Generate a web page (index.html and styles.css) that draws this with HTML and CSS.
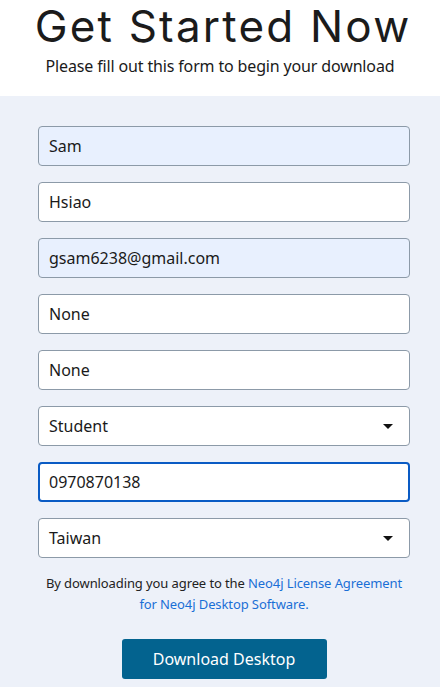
FILE: index.html
```html
<!DOCTYPE html>
<html>
<head>
<meta charset="utf-8">
<link rel="stylesheet" href="styles.css">
</head>
<body>
<header class="hero">
  <h1 class="title">Get Started Now</h1>
  <p class="subtitle">Please fill out this form to begin your download</p>
</header>
<section class="panel">
  <form class="form">
    <div class="field autofill">Sam</div>
    <div class="field">Hsiao</div>
    <div class="field autofill">gsam6238@gmail.com</div>
    <div class="field">None</div>
    <div class="field">None</div>
    <div class="field select"><span>Student</span><span class="caret"></span></div>
    <div class="field focus">0970870138</div>
    <div class="field select"><span>Taiwan</span><span class="caret"></span></div>
  </form>
  <p class="legal">By downloading you agree to the <a href="#">Neo4j License Agreement<br>for Neo4j Desktop Software.</a></p>
  <div class="actions"><button class="btn" type="button">Download Desktop</button></div>
</section>
</body>
</html>
```
FILE: styles.css
```css
* { box-sizing: border-box; }
html, body { margin: 0; padding: 0; background: #fff; }
body { font-family: "Noto Sans", "Open Sans", sans-serif; color: #1a1a1a; }
.hero { text-align: center; height: 96px; }
.title {
  margin: 0;
  padding-left: 6px;
  font-family: "Inter", sans-serif;
  font-weight: 400;
  font-size: 44px;
  line-height: 52px;
  letter-spacing: 2.2px;
  color: #1b1b1b;
}
.subtitle { margin: 3px 0 0; font-size: 16px; line-height: 22px; letter-spacing: -0.15px; color: #1a1a1a; }
.panel { background: #edf1f9; padding: 30px 30px 20px 38px; min-height: 600px; }
.form { display: flex; flex-direction: column; gap: 16px; width: 372px; }
.field {
  height: 40px;
  border: 1px solid #8c9aa8;
  border-radius: 4px;
  background: #fff;
  padding: 0 10px;
  display: flex;
  align-items: center;
  font-size: 16px;
  color: #1a1a1a;
}
.autofill { background: #e8f0fe; }
.focus { border: 2px solid #0a5bc4; padding-left: 9px; }
.select { justify-content: space-between; padding-right: 16px; }
.caret { width: 0; height: 0; border-left: 5px solid transparent; border-right: 5px solid transparent; border-top: 5px solid #111; }
.legal { width: 372px; text-align: center; font-size: 13px; line-height: 21px; margin: 15px 0 0; color: #222; letter-spacing: -0.1px; }
.legal a { color: #1a6fd6; text-decoration: none; }
.actions { width: 372px; display: flex; justify-content: center; margin-top: 24px; }
.btn {
  width: 205px; height: 40px;
  background: #03638f; color: #fff;
  border: 0; border-radius: 3px;
  font-family: "Noto Sans", sans-serif; font-size: 16px;
}
```
